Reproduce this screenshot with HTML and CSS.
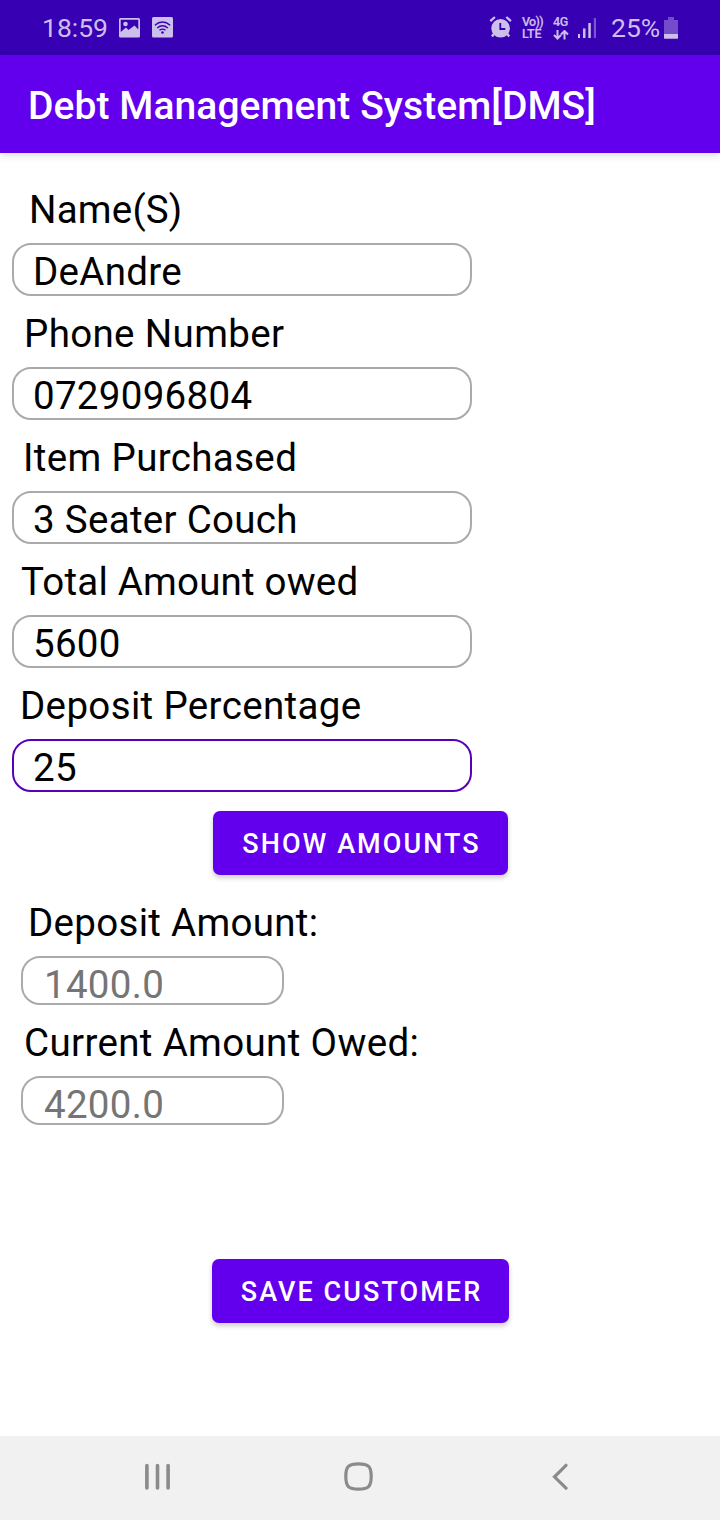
FILE: index.html
```html
<!DOCTYPE html>
<html lang="en">
<head>
<meta charset="utf-8">
<title>Debt Management System[DMS]</title>
<link rel="stylesheet" href="styles.css">
</head>
<body>
<div class="screen">
  <header class="status">
    <span class="clock">18:59</span>
    <svg class="picture" width="22" height="22" viewBox="0 0 22 22"><path fill="currentColor" fill-rule="evenodd" d="M1.500 0h18q1.500 0 1.500 1.500v16.500q0 1.500-1.500 1.500h-18q-1.500 0-1.500-1.500v-16.500q0-1.500 1.500-1.500zM1.700 1.700v12.300l5.300-4.500 2.500 2.500 6-4.500 3.800 4v-9.800z"/><circle cx="6.500" cy="6" r="2.300" fill="currentColor"/></svg>
    <svg class="wifi" width="22" height="22" viewBox="0 0 22 22"><rect width="21" height="20.500" rx="1.500" fill="currentColor"/><g fill="none" stroke="#3700b3" stroke-width="1.400"><path d="M2.800 8.300q7.700-6.500 15.400 0M5.200 11q5.300-4.500 10.600 0M7.500 13.300q3-2.400 6 0"/></g><circle cx="10.500" cy="15.500" r="1.300" fill="#3700b3"/></svg>
    <span class="spacer"></span>
    <svg class="alarm" width="24" height="24" viewBox="0 0 24 24"><g fill="none" stroke="currentColor" stroke-width="2.300"><path d="M1.300 5.200l4.600-4.200M17.300 1l4.600 4.200M4.700 18l-1.700 2.500M18.500 18l1.700 2.500"/></g><circle cx="11.600" cy="12.300" r="9.300" fill="currentColor"/><path d="M11.300 7v6h5" fill="none" stroke="#3700b3" stroke-width="1.800"/></svg>
    <span class="tiny volte"><span>Vo))</span><span class="lte">LTE</span></span>
    <span class="tiny data"><span>4G</span><svg width="16" height="10" viewBox="0 0 16 10"><path d="M4.500 0v8M1 5l3.500 3.500 3.500-3.500M11.500 9.500v-8M8 4.500l3.500-3.500 3.500 3.500" fill="none" stroke="currentColor" stroke-width="2"/></svg></span>
    <svg class="signal" width="19" height="21" viewBox="0 0 19 21"><path fill="currentColor" d="M0 16h2v4h-2zM5 10.500h2.500v9.500h-2.500zM10.300 5h2.500v15h-2.500z"/><path fill="currentColor" opacity=".45" d="M15.800 0h2.200v20h-2.200z"/></svg>
    <span class="charge">25%</span>
    <svg class="battery" width="15" height="22" viewBox="0 0 15 22"><path fill="currentColor" opacity=".4" d="M4 0h6v3h4v14h-14v-14h4z"/><path fill="currentColor" d="M0 17h14v4q0 .700-.700.700h-12.600q-.700 0-.700-.700z"/></svg>
  </header>
  <div class="appbar"><h1>Debt Management System[DMS]</h1></div>
  <main class="form">
    <div class="field"><label class="l-name" for="name">Name(S)</label><input id="name" value="DeAndre"></div>
    <div class="field"><label class="l-phone" for="phone">Phone Number</label><input id="phone" value="0729096804"></div>
    <div class="field"><label class="l-item" for="item">Item Purchased</label><input id="item" value="3 Seater Couch"></div>
    <div class="field"><label class="l-total" for="total">Total Amount owed</label><input id="total" value="5600"></div>
    <div class="field"><label class="l-percent" for="percent">Deposit Percentage</label><input id="percent" class="active" value="25"></div>
    <button class="show" type="button">SHOW AMOUNTS</button>
    <div class="results">
      <div class="field"><label class="l-deposit" for="deposit">Deposit Amount:</label><input id="deposit" value="1400.0" readonly></div>
      <div class="field"><label class="l-current" for="current">Current Amount Owed:</label><input id="current" value="4200.0" readonly></div>
    </div>
    <button class="save" type="button">SAVE CUSTOMER</button>
  </main>
  <nav class="navbar">
    <svg class="recents" width="26" height="28" viewBox="0 0 26 28"><path d="M1.900 3.500v22.500M12.500 3.500v22.500M23.100 3.500v22.500" stroke="currentColor" stroke-width="3.600" stroke-linecap="round"/></svg>
    <svg class="home" width="30" height="30" viewBox="0 0 30 30"><path d="M14.500 1.800C24.500 1.800 27.200 4.500 27.200 14.500S24.500 27.200 14.500 27.200 1.800 24.500 1.800 14.500 4.500 1.800 14.500 1.800z" fill="none" stroke="currentColor" stroke-width="3.200"/></svg>
    <svg class="back" width="17" height="28" viewBox="0 0 17 28"><path d="M14 3.300L2.500 14.800 14 26.200" fill="none" stroke="currentColor" stroke-width="3.200" stroke-linecap="round"/></svg>
  </nav>
</div>
</body>
</html>
```
FILE: styles.css
```css
* { box-sizing: border-box; }
body { margin: 0; font-family: Roboto, "Liberation Sans", sans-serif; background: #fff; }
.screen { width: 720px; height: 1520px; display: flex; flex-direction: column; overflow: hidden; }
svg { display: block; flex: none; }

.status { height: 55px; flex: none; display: flex; align-items: flex-start; background: #3700b3; color: #cdbfec; padding: 0 41px 0 42px; }
.spacer { flex: 1; }
.clock, .charge { font-size: 26.5px; line-height: 32px; margin-top: 12px; white-space: nowrap; }
.clock { width: 77px; }
.charge { width: 53px; }
.picture { margin-top: 18px; }
.wifi { margin: 17px 0 0 11px; }
.alarm { margin: 16px 9px 0 0; }
.tiny { display: flex; flex-direction: column; margin-top: 16px; font-size: 12.5px; line-height: 12px; font-weight: 500; -webkit-text-stroke: .2px; }
.volte { width: 31px; letter-spacing: -.7px; }
.lte { letter-spacing: -.2px; }
.data { width: 25px; letter-spacing: -.3px; }
.data svg { margin-top: 2px; }
.signal { margin-top: 18px; margin-right: 14px; }
.battery { margin-top: 17px; }

.appbar { height: 98px; flex: none; display: flex; align-items: center; padding: 5px 28px 0; background: #6200ee; box-shadow: 0 2px 8px rgba(0,0,0,.15); }
h1 { margin: 0; color: #fff; font-size: 39px; line-height: 45px; font-weight: 500; letter-spacing: .07px; white-space: nowrap; }

.form { flex: 1; display: flex; flex-direction: column; padding: 19px 12px 0; }
.field { display: flex; flex-direction: column; align-items: flex-start; }
label { font-size: 38.5px; line-height: 45px; letter-spacing: .35px; color: #000; margin: 15px 0 11px; white-space: nowrap; }
.l-name { padding-left: 17px; letter-spacing: .2px; }
.l-phone { padding-left: 12px; }
.l-item { padding-left: 11px; }
.l-total { padding-left: 9px; letter-spacing: .2px; }
.l-percent { padding-left: 8px; }
.l-deposit { padding-left: 7px; letter-spacing: .3px; }
.l-current { padding-left: 3px; }
input { width: 460px; height: 53px; padding: 3px 19px 0; border: 2px solid #aaa; border-radius: 19px; background: #fff; color: #000; font: 38.5px Roboto, "Liberation Sans", sans-serif; letter-spacing: .3px; outline: none; }
input.active { border-color: #5800b9; }
button { align-self: center; height: 64px; padding: 2px 0 0 3px; border: 0; border-radius: 7px; background: #6200ee; color: #fff; font: 500 27px Roboto, "Liberation Sans", sans-serif; letter-spacing: 2.05px; white-space: nowrap; box-shadow: 0 3px 5px rgba(0,0,0,.2); }
.show { width: 295px; margin-top: 19px; }
.save { width: 297px; margin-top: 134px; }
.results { padding: 10px 0 0 9px; }
.results input { width: 263px; height: 49px; padding: 7px 21px 0; color: #757575; }

.navbar { height: 84px; flex: none; display: flex; align-items: flex-start; padding: 26px 0 0 145px; background: #f1f1f1; color: #8b8b8b; }
.home { margin-left: 173px; }
.back { margin-left: 178px; }
```
